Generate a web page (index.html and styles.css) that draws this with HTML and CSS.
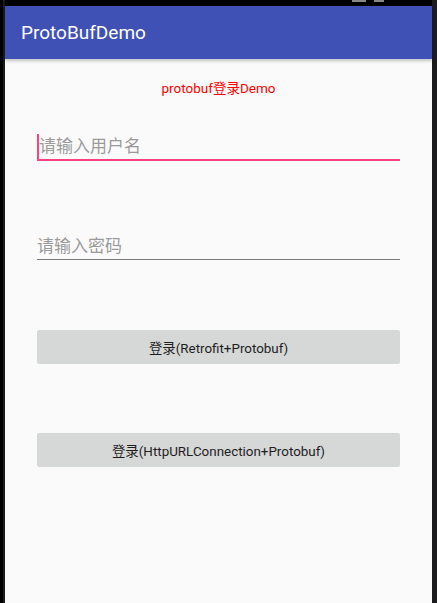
FILE: index.html
```html
<!DOCTYPE html>
<html>
<head>
<meta charset="utf-8">
<link rel="stylesheet" href="styles.css">
</head>
<body>
<div class="frame">
  <div class="edge edge-left"></div>
  <div class="screen">
    <div class="status"><span class="sicon s1"></span><span class="sicon s2"></span></div>
    <div class="appbar"><span class="title">ProtoBufDemo</span></div>
    <div class="content">
      <div class="subtitle">protobuf登录Demo</div>
      <div class="field field-active"><span class="caret"></span><span class="hint">请输入用户名</span></div>
      <div class="field field-idle"><span class="hint">请输入密码</span></div>
      <div class="btn btn-first">登录(Retrofit+Protobuf)</div>
      <div class="btn btn-second">登录(HttpURLConnection+Protobuf)</div>
    </div>
  </div>
  <div class="edge edge-right"></div>
</div>
</body>
</html>
```
FILE: styles.css
```css
html, body {
  margin: 0;
  padding: 0;
  height: 603px;
  overflow: hidden;
  background: #111;
  font-family: Roboto, "Noto Sans CJK SC", sans-serif;
}
.frame {
  display: flex;
  height: 603px;
}
.edge-left {
  width: 5px;
  background: linear-gradient(to right, #000 0, #000 3px, #1b1b1d 3px);
}
.edge-right {
  width: 5px;
  background: #1c1c1e;
}
.screen {
  width: 427px;
  background: #fafafa;
  display: flex;
  flex-direction: column;
}
.status {
  height: 6px;
  background: #000;
  display: flex;
  justify-content: flex-end;
  gap: 8px;
  padding-right: 48px;
}
.sicon {
  height: 2px;
  background: #888;
}
.s1 { width: 14px; }
.s2 { width: 10px; }
.appbar {
  height: 53px;
  background: #3f51b5;
  padding-left: 16px;
  display: flex;
  align-items: center;
  box-shadow: 0 2px 3px rgba(0,0,0,0.22);
  position: relative;
  z-index: 1;
}
.title {
  color: #fff;
  font-size: 19px;
  line-height: 24px;
}
.content {
  padding: 0 32px;
  display: flex;
  flex-direction: column;
}
.subtitle {
  margin-top: 21px;
  text-align: center;
  color: #ff0000;
  font-size: 13.5px;
  line-height: 16px;
}
.field {
  height: 25px;
  display: flex;
  align-items: stretch;
}
.hint {
  color: #9a9a9a;
  font-size: 17px;
  line-height: 25px;
}
.field-active {
  margin-top: 38px;
  border-bottom: 2px solid #ff4081;
}
.caret {
  width: 2px;
  background: #ff4081;
}
.field-idle {
  margin-top: 73px;
  border-bottom: 1px solid #7a7a7a;
}
.btn {
  height: 34px;
  background: #d6d7d7;
  border-radius: 2px;
  display: flex;
  align-items: center;
  justify-content: center;
  font-size: 13.4px;
  color: #1e1e1e;
}
.btn-first { margin-top: 70px; }
.btn-second { margin-top: 69px; }
```
